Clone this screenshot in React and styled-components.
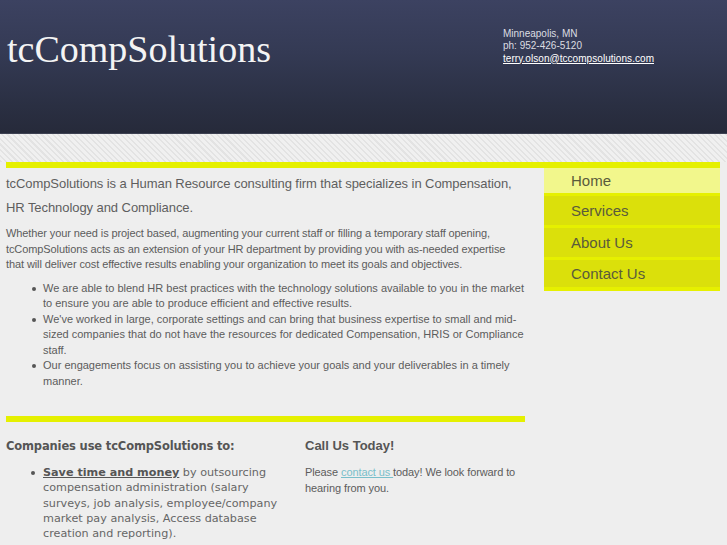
import React from "react";
import styled, { createGlobalStyle } from "styled-components";

const GlobalStyle = createGlobalStyle`
  html, body {
    margin: 0;
    padding: 0;
  }
  body {
    background-color: #eeeeee;
    font-family: "Liberation Sans", Arial, sans-serif;
    color: #5c5c5c;
  }
`;

const Header = styled.header`
  height: 134px;
  display: flex;
  align-items: flex-start;
  background: linear-gradient(to bottom, #3c4261 0%, #343a54 40%, #2a2f42 80%, #262a3a 100%);
  border-bottom: 1px solid #3d4152;
  box-sizing: border-box;
`;

const Logo = styled.h1`
  margin: 29px 0 0 7px;
  width: 496px;
  font-family: "Liberation Serif", "Times New Roman", serif;
  font-weight: normal;
  font-size: 38px;
  line-height: 40px;
  color: #f4f4f4;
`;

const Contact = styled.div`
  margin-top: 27.5px;
  font-size: 10px;
  line-height: 12.5px;
  color: #dcdde2;

  a {
    color: #ffffff;
    letter-spacing: 0.05px;
  }
`;

const Stripes = styled.div`
  height: 28px;
  background: repeating-linear-gradient(45deg, #e3e3e3 0px, #e3e3e3 1.5px, #f0f0f0 1.5px, #f0f0f0 4px);
`;

const Wrapper = styled.div`
  padding: 0 7px 0 6px;
`;

const Bar = styled.div`
  height: 6px;
  background: #e5f000;
  margin-top: ${(p) => p.$top || "0"};
`;

const Columns = styled.div`
  display: grid;
  grid-template-columns: 519px 176px;
  column-gap: 19px;
  align-items: start;
`;

const Main = styled.main``;

const Lead = styled.p`
  margin: 4px 0 0;
  font-size: 13px;
  line-height: 24px;
  letter-spacing: -0.07px;
  color: #5e5e5e;
`;

const Text = styled.p`
  margin: ${(p) => p.$margin || "0"};
  font-size: 11px;
  line-height: 15.5px;
  letter-spacing: -0.1px;
`;

const List = styled.ul`
  margin: 8px 0 0;
  padding-left: 37px;
  list-style: none;
  font-size: 11px;
  line-height: 15.5px;
`;

const Item = styled.li`
  position: relative;

  &::before {
    content: "";
    position: absolute;
    left: ${(p) => p.$dot || "-11px"};
    top: 6px;
    width: 4px;
    height: 4px;
    border-radius: 50%;
    background: #555555;
  }
`;

const Menu = styled.nav`
  display: flex;
  flex-direction: column;
  gap: 3px;
  background: #e6f000;
  padding-bottom: 4px;
`;

const MenuItem = styled.a`
  display: block;
  height: ${(p) => p.$h}px;
  padding-left: 27px;
  font-size: 15px;
  line-height: ${(p) => p.$h}px;
  color: #5a5b3c;
  text-decoration: none;
  background: ${(p) => (p.$active ? "#f2f78c" : "#dbe00b")};
`;

const Bottom = styled.div`
  display: grid;
  grid-template-columns: 280px 1fr;
  column-gap: 19px;
  margin-top: 16px;
`;

const Heading = styled.h3`
  margin: 0;
  font-family: ${(p) => (p.$dejavu ? `"DejaVu Sans", Verdana, sans-serif` : `"Liberation Sans", Arial, sans-serif`)};
  font-size: ${(p) => (p.$dejavu ? "11.5px" : "13px")};
  letter-spacing: ${(p) => (p.$dejavu ? "-0.15px" : "0")};
  font-weight: bold;
  line-height: 16px;
  color: #555555;
`;

const BenefitList = styled.ul`
  margin: 11px 0 0;
  padding-left: 37px;
  list-style: none;
  font-family: "DejaVu Sans", Verdana, sans-serif;
  font-size: 11.2px;
  line-height: 15.3px;
  color: #666666;

  a {
    font-weight: bold;
    color: #555555;
  }
`;

const Link = styled.a`
  color: #79bfca;
`;

export default function App() {
  return (
    <>
      <GlobalStyle />
      <Header>
        <Logo>tcCompSolutions</Logo>
        <Contact>
          Minneapolis, MN
          <br />
          ph: 952-426-5120
          <br />
          <a href="#">terry.olson@tccompsolutions.com</a>
        </Contact>
      </Header>
      <Stripes />
      <Wrapper>
        <Bar />
        <Columns>
          <Main>
            <Lead>
              tcCompSolutions is a Human Resource consulting firm that specializes in Compensation,
              HR Technology and Compliance.
            </Lead>
            <Text $margin="6px 0 0">
              Whether your need is project based, augmenting your current staff or filling a
              temporary staff opening, tcCompSolutions acts as an extension of your HR department by
              providing you with as-needed expertise that will deliver cost effective results
              enabling your organization to meet its goals and objectives.
            </Text>
            <List>
              <Item>
                We are able to blend HR best practices with the technology solutions available to
                you in the market to ensure you are able to produce efficient and effective results.
              </Item>
              <Item>
                We've worked in large, corporate settings and can bring that business expertise to
                small and mid-sized companies that do not have the resources for dedicated
                Compensation, HRIS or Compliance staff.
              </Item>
              <Item>
                Our engagements focus on assisting you to achieve your goals and your deliverables
                in a timely manner.
              </Item>
            </List>
            <Bar $top="27px" />
            <Bottom>
              <div>
                <Heading $dejavu>Companies use tcCompSolutions to:</Heading>
                <BenefitList>
                  <Item $dot="-12px">
                    <a href="#">Save time and money</a> by outsourcing compensation administration
                    (salary surveys, job analysis, employee/company market pay analysis, Access
                    database creation and reporting).
                  </Item>
                </BenefitList>
              </div>
              <div>
                <Heading>Call Us Today!</Heading>
                <Text $margin="11px 0 0">
                  Please <Link href="#">contact us </Link>today! We look forward to hearing from
                  you.
                </Text>
              </div>
            </Bottom>
          </Main>
          <Menu>
            <MenuItem href="#" $active $h={25}>
              Home
            </MenuItem>
            <MenuItem href="#" $h={29}>
              Services
            </MenuItem>
            <MenuItem href="#" $h={29}>
              About Us
            </MenuItem>
            <MenuItem href="#" $h={27}>
              Contact Us
            </MenuItem>
          </Menu>
        </Columns>
      </Wrapper>
    </>
  );
}
